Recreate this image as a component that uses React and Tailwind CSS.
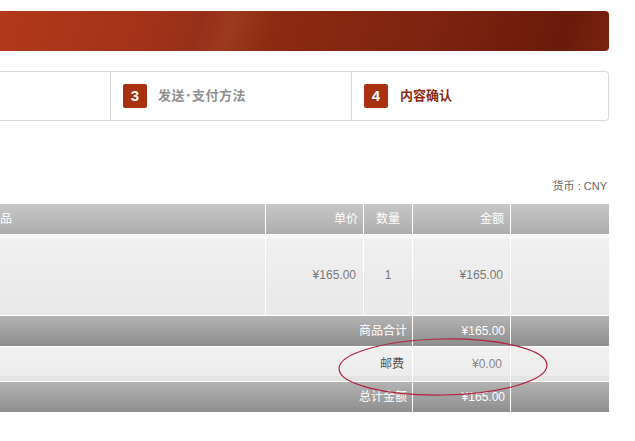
export default function App() {
  const font = { fontFamily: '"Liberation Sans", "Noto Sans CJK SC", sans-serif' };
  return (
    <div className="relative w-[635px] h-[441px] bg-white overflow-hidden" style={font}>
      {/* banner */}
      <div className="mt-[11px] w-[609px] h-[40px] rounded-r-[4px] bg-[linear-gradient(110deg,#b3391a_0%,#a23218_25%,#96301a_33%,#9c3a1e_38%,#8c2a12_45%,#7e2410_70%,#6a1a0b_92%,#7a2410_100%)]" />

      {/* steps */}
      <div className="mt-[20px] w-[609px] h-[50px] flex border border-l-0 border-[#d9d9d9] rounded-r-[4px]">
        <div className="w-[110px]" />
        <div className="w-[241px] flex items-center border-l border-[#d9d9d9] pl-[12px]">
          <span className="w-[24px] h-[24px] rounded-[2px] bg-[#a8310f] text-white text-[15px] font-bold flex items-center justify-center">3</span>
          <span className="ml-[11px] text-[13px] font-bold text-[#8f8f8f] tracking-[0.5px]">发送･支付方法</span>
        </div>
        <div className="flex-1 flex items-center border-l border-[#d9d9d9] pl-[12px]">
          <span className="w-[24px] h-[24px] rounded-[2px] bg-[#a8310f] text-white text-[15px] font-bold flex items-center justify-center">4</span>
          <span className="ml-[12px] text-[13px] font-bold text-[#8c2a10]">内容确认</span>
        </div>
      </div>

      {/* currency */}
      <div className="w-[607px] mt-[58px] text-right text-[11px] leading-[14px] text-[#666]">货币 : CNY</div>

      {/* table */}
      <div className="mt-[11px] w-[608px] grid grid-cols-[265px_97px_48px_97px_98px] gap-px bg-white text-[12px]">
        {/* header */}
        <div className="h-[30px] flex items-center text-white bg-[linear-gradient(#c7c7c7,#adadad)]">
          <span className="-ml-[12px]">商品</span>
        </div>
        <div className="h-[30px] flex items-center justify-end pr-[5px] text-white bg-[linear-gradient(#c7c7c7,#adadad)]">单价</div>
        <div className="h-[30px] flex items-center justify-center text-white bg-[linear-gradient(#c7c7c7,#adadad)]">数量</div>
        <div className="h-[30px] flex items-center justify-end pr-[6px] text-white bg-[linear-gradient(#c7c7c7,#adadad)]">金额</div>
        <div className="h-[30px] bg-[linear-gradient(#c7c7c7,#adadad)]" />

        {/* item row */}
        <div className="h-[80px] bg-[linear-gradient(#f6f6f6_0px,#f6f6f6_3px,#f0f0f0_4px,#e9e9e9_100%)]" />
        <div className="h-[80px] flex items-center justify-end pr-[7px] text-[#7a7a7a] bg-[linear-gradient(#f6f6f6_0px,#f6f6f6_3px,#f0f0f0_4px,#e9e9e9_100%)]">¥165.00</div>
        <div className="h-[80px] flex items-center justify-center text-[#7a7a7a] bg-[linear-gradient(#f6f6f6_0px,#f6f6f6_3px,#f0f0f0_4px,#e9e9e9_100%)]">1</div>
        <div className="h-[80px] flex items-center justify-end pr-[7px] text-[#7a7a7a] bg-[linear-gradient(#f6f6f6_0px,#f6f6f6_3px,#f0f0f0_4px,#e9e9e9_100%)]">¥165.00</div>
        <div className="h-[80px] bg-[linear-gradient(#f6f6f6_0px,#f6f6f6_3px,#f0f0f0_4px,#e9e9e9_100%)]" />

        {/* subtotal */}
        <div className="col-span-3 h-[30px] flex items-center justify-end pr-[5px] text-white bg-[linear-gradient(#b3b3b3,#8e8e8e)]">商品合计</div>
        <div className="h-[30px] flex items-center justify-end pr-[5px] text-white bg-[linear-gradient(#b3b3b3,#8e8e8e)]">¥165.00</div>
        <div className="h-[30px] bg-[linear-gradient(#b3b3b3,#8e8e8e)]" />

        {/* shipping */}
        <div className="col-span-3 h-[34px] flex items-center justify-end pr-[8px] text-[#555] bg-[linear-gradient(#f1f1f1_0%,#ececec_85%,#e4e4e4_86%,#e4e4e4_100%)]">邮费</div>
        <div className="h-[34px] flex items-center justify-end pr-[8px] text-[#888] bg-[linear-gradient(#f1f1f1_0%,#ececec_85%,#e4e4e4_86%,#e4e4e4_100%)]">¥0.00</div>
        <div className="h-[34px] bg-[linear-gradient(#f1f1f1_0%,#ececec_85%,#e4e4e4_86%,#e4e4e4_100%)]" />

        {/* total */}
        <div className="col-span-3 h-[30px] flex items-center justify-end pr-[5px] text-white bg-[linear-gradient(#b3b3b3,#8e8e8e)]">总计金额</div>
        <div className="h-[30px] flex items-center justify-end pr-[5px] text-white bg-[linear-gradient(#b3b3b3,#8e8e8e)]">¥165.00</div>
        <div className="h-[30px] bg-[linear-gradient(#b3b3b3,#8e8e8e)]" />
      </div>

      {/* hand-drawn annotation */}
      <svg className="absolute left-[337px] top-[337px]" width="214" height="62" viewBox="0 0 214 62">
        <ellipse cx="106" cy="30" rx="104" ry="28" fill="none" stroke="#b4223f" strokeWidth="1.2" transform="rotate(-1 106 30)" />
      </svg>
    </div>
  );
}
